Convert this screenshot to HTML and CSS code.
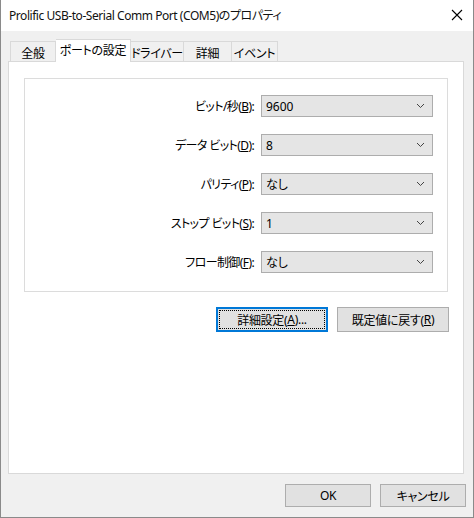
FILE: index.html
```html
<!DOCTYPE html>
<html lang="ja">

<head>
    <meta charset="UTF-8">
    <title>Prolific USB-to-Serial Comm Port (COM5)のプロパティ</title>
    <link rel="stylesheet" href="styles.css">
</head>

<body>
    <div class="window">
        <div class="titlebar">
            <span class="title">Prolific USB-to-Serial Comm Port (COM5)のプロパティ</span>
            <svg class="close" width="12" height="12" viewBox="0 0 12 12">
                <path d="M1 1 L11 11 M11 1 L1 11" stroke="#000" stroke-width="1.1" fill="none" />
            </svg>
        </div>
        <div class="content">
            <div class="tabs">
                <div class="tab t1">全般</div>
                <div class="tab t2 selected">ポートの設定</div>
                <div class="tab t3">ドライバー</div>
                <div class="tab t4">詳細</div>
                <div class="tab t5">イベント</div>
            </div>
            <div class="panel">
                <div class="group">
                    <div class="row">
                        <label>ビット/秒(<u>B</u>):</label>
                        <div class="select"><span>9600</span><svg width="9" height="6" viewBox="0 0 9 6"><path d="M1 1 L4.5 4.5 L8 1" stroke="#444" fill="none" /></svg></div>
                    </div>
                    <div class="row">
                        <label>データ ビット(<u>D</u>):</label>
                        <div class="select"><span>8</span><svg width="9" height="6" viewBox="0 0 9 6"><path d="M1 1 L4.5 4.5 L8 1" stroke="#444" fill="none" /></svg></div>
                    </div>
                    <div class="row">
                        <label>パリティ(<u>P</u>):</label>
                        <div class="select"><span>なし</span><svg width="9" height="6" viewBox="0 0 9 6"><path d="M1 1 L4.5 4.5 L8 1" stroke="#444" fill="none" /></svg></div>
                    </div>
                    <div class="row">
                        <label>ストップ ビット(<u>S</u>):</label>
                        <div class="select"><span>1</span><svg width="9" height="6" viewBox="0 0 9 6"><path d="M1 1 L4.5 4.5 L8 1" stroke="#444" fill="none" /></svg></div>
                    </div>
                    <div class="row">
                        <label>フロー制御(<u>F</u>):</label>
                        <div class="select"><span>なし</span><svg width="9" height="6" viewBox="0 0 9 6"><path d="M1 1 L4.5 4.5 L8 1" stroke="#444" fill="none" /></svg></div>
                    </div>
                </div>
                <div class="group-buttons">
                    <div class="button default"><span class="focus">詳細設定(<u>A</u>)...</span></div>
                    <div class="button">既定値に戻す(<u>R</u>)</div>
                </div>
            </div>
            <div class="footer">
                <div class="button small">OK</div>
                <div class="button small">キャンセル</div>
            </div>
        </div>
    </div>
</body>

</html>
```

FILE: styles.css
```css
* {
    box-sizing: border-box;
}

body {
    margin: 0;
    font-family: "Noto Sans", "Noto Sans CJK JP", sans-serif;
    font-size: 12px;
    font-feature-settings: "palt";
    color: #000;
}

.window {
    width: 474px;
    height: 518px;
    display: flex;
    flex-direction: column;
    border-left: 1px solid #8a8a8a;
    border-right: 1px solid #8a8a8a;
    border-bottom: 1px solid #8a8a8a;
}

.titlebar {
    height: 31px;
    background: #fff;
    display: flex;
    align-items: center;
    justify-content: space-between;
    padding: 0 9px 1px 8px;
}

.title {
    font-size: 12px;
    letter-spacing: -0.45px;
    color: #111;
}

.close {
    margin-right: 1px;
}

.content {
    flex: 1;
    background: #f0f0f0;
    display: flex;
    flex-direction: column;
    padding-top: 8px;
}

.tabs {
    display: flex;
    align-items: flex-end;
    height: 22px;
    margin-left: 9px;
}

.tab {
    height: 20px;
    border: 1px solid #d9d9d9;
    border-bottom: none;
    border-left: none;
    display: flex;
    align-items: center;
    justify-content: center;
    padding-top: 2px;
    white-space: nowrap;
    letter-spacing: -0.3px;
}

.t1 {
    width: 46px;
    border-left: 1px solid #d9d9d9;
}

.t2 {
    width: 75px;
}

.t3 {
    width: 53px;
}

.t4 {
    width: 48px;
}

.t5 {
    width: 46px;
}

.tab.selected {
    height: 23px;
    background: #fff;
    margin-bottom: -1px;
    position: relative;
    padding-top: 0;
    padding-bottom: 3px;
}

.panel {
    width: 456px;
    height: 413px;
    margin-left: 7px;
    background: #fff;
    border: 1px solid #d9d9d9;
    padding: 16px 0 0 15px;
}

.group {
    width: 424px;
    border: 1px solid #dcdcdc;
    padding: 16px 14px 18px 0;
    display: flex;
    flex-direction: column;
    gap: 17px;
}

.row {
    display: flex;
    justify-content: flex-end;
    align-items: center;
    gap: 7px;
    height: 22px;
}

.row label {
    letter-spacing: -0.6px;
}

.select {
    width: 172px;
    height: 22px;
    background: #e5e5e5;
    border: 1px solid #adadad;
    display: flex;
    align-items: center;
    justify-content: space-between;
    padding: 0 7px 0 4px;
}

.group-buttons {
    width: 425px;
    display: flex;
    justify-content: flex-end;
    gap: 9px;
    margin-top: 15px;
}

.button {
    width: 112px;
    height: 25px;
    background: #e1e1e1;
    border: 1px solid #adadad;
    display: flex;
    align-items: center;
    justify-content: center;
    white-space: nowrap;
    letter-spacing: -0.3px;
}

.button.default {
    border: 2px solid #0078d7;
    padding: 1px;
}

.focus {
    width: 100%;
    height: 100%;
    border: 1px dotted #000;
    display: flex;
    align-items: center;
    justify-content: center;
}

.footer {
    display: flex;
    justify-content: flex-end;
    gap: 9px;
    padding: 10px 7px 10px 0;
}

.button.small {
    width: 86px;
    height: 23px;
}
```
